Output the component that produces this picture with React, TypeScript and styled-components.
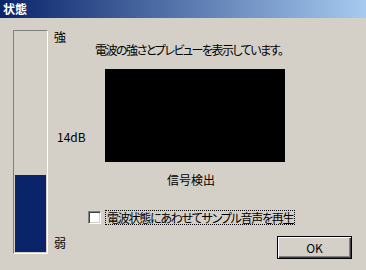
import styled, { createGlobalStyle } from 'styled-components';

const GlobalStyle = createGlobalStyle`
  html, body {
    margin: 0;
    padding: 0;
    background: #d4d0c8;
  }
  body {
    font-family: "Noto Sans CJK JP", "Noto Sans", sans-serif;
    font-size: 12px;
    color: #000;
  }
`;

const Window = styled.div`
  width: 366px;
  height: 270px;
  background: #d4d0c8;
  overflow: hidden;
  display: flex;
  flex-direction: column;
`;

const TitleBar = styled.div`
  height: 18px;
  line-height: 18px;
  padding-left: 3px;
  background: linear-gradient(to right, #0a246a, #a6caf0);
  color: #fff;
  font-weight: bold;
  font-size: 12px;
`;

const Body = styled.div`
  flex: 1;
  display: flex;
  padding: 12px 14px 0 13px;
`;

const Meter = styled.div`
  box-sizing: border-box;
  width: 35px;
  height: 224px;
  padding: 1px;
  border-top: 1px solid #808080;
  border-left: 1px solid #808080;
  border-right: 1px solid #fff;
  border-bottom: 1px solid #fff;
  display: flex;
  flex-direction: column;
  justify-content: flex-end;
`;

const MeterFill = styled.div<{ $level: number }>`
  height: ${p => p.$level}%;
  background: #0a246a;
`;

const Scale = styled.div`
  width: 34px;
  height: 220px;
  margin-left: 6px;
  display: flex;
  flex-direction: column;
  justify-content: space-between;
  line-height: 14px;
`;

const ScaleMid = styled.span`
  padding-left: 3px;
  margin-top: -6px;
`;

const Content = styled.div`
  flex: 1;
  display: flex;
  flex-direction: column;
`;

const Message = styled.div`
  margin: 13px 0 0 7px;
  line-height: 14px;
  font-feature-settings: 'palt';
  letter-spacing: -1.5px;
  white-space: nowrap;
`;

const Preview = styled.div`
  margin: 12px 0 0 17px;
  width: 180px;
  height: 93px;
  background: #000;
`;

const Status = styled.div`
  margin: 11px 0 0 13px;
  width: 180px;
  text-align: center;
  line-height: 14px;
`;

const CheckRow = styled.label`
  margin-top: 23px;
  display: flex;
  align-items: center;
  gap: 4px;
`;

const CheckBox = styled.span`
  box-sizing: border-box;
  width: 13px;
  height: 13px;
  background: #fff;
  border-top: 1px solid #808080;
  border-left: 1px solid #808080;
  border-right: 1px solid #fff;
  border-bottom: 1px solid #fff;
  box-shadow: inset 1px 1px #404040, inset -1px -1px #d4d0c8;
`;

const CheckLabel = styled.span`
  border: 1px dotted #000;
  padding: 0 1px;
  line-height: 13px;
  font-feature-settings: 'palt';
  letter-spacing: -1.25px;
  white-space: nowrap;
`;

const OkButton = styled.button`
  align-self: flex-end;
  margin-top: 11px;
  width: 75px;
  height: 23px;
  box-sizing: border-box;
  background: #d4d0c8;
  border: 1px solid #000;
  box-shadow: inset 1px 1px #fff, inset -1px -1px #404040, inset -2px -2px #808080;
  font-family: "Noto Sans CJK JP", "Noto Sans", sans-serif;
  font-size: 12px;
  color: #000;
  padding: 0;
`;

const App = () => {
  const level = 35;
  return (
    <Window>
      <GlobalStyle />
      <TitleBar>状態</TitleBar>
      <Body>
        <Meter>
          <MeterFill $level={level} />
        </Meter>
        <Scale>
          <span>強</span>
          <ScaleMid>14dB</ScaleMid>
          <span>弱</span>
        </Scale>
        <Content>
          <Message>電波の強さとプレビューを表示しています。</Message>
          <Preview />
          <Status>信号検出</Status>
          <CheckRow>
            <CheckBox />
            <CheckLabel>電波状態にあわせてサンプル音声を再生</CheckLabel>
          </CheckRow>
          <OkButton>OK</OkButton>
        </Content>
      </Body>
    </Window>
  );
};

export default App;
